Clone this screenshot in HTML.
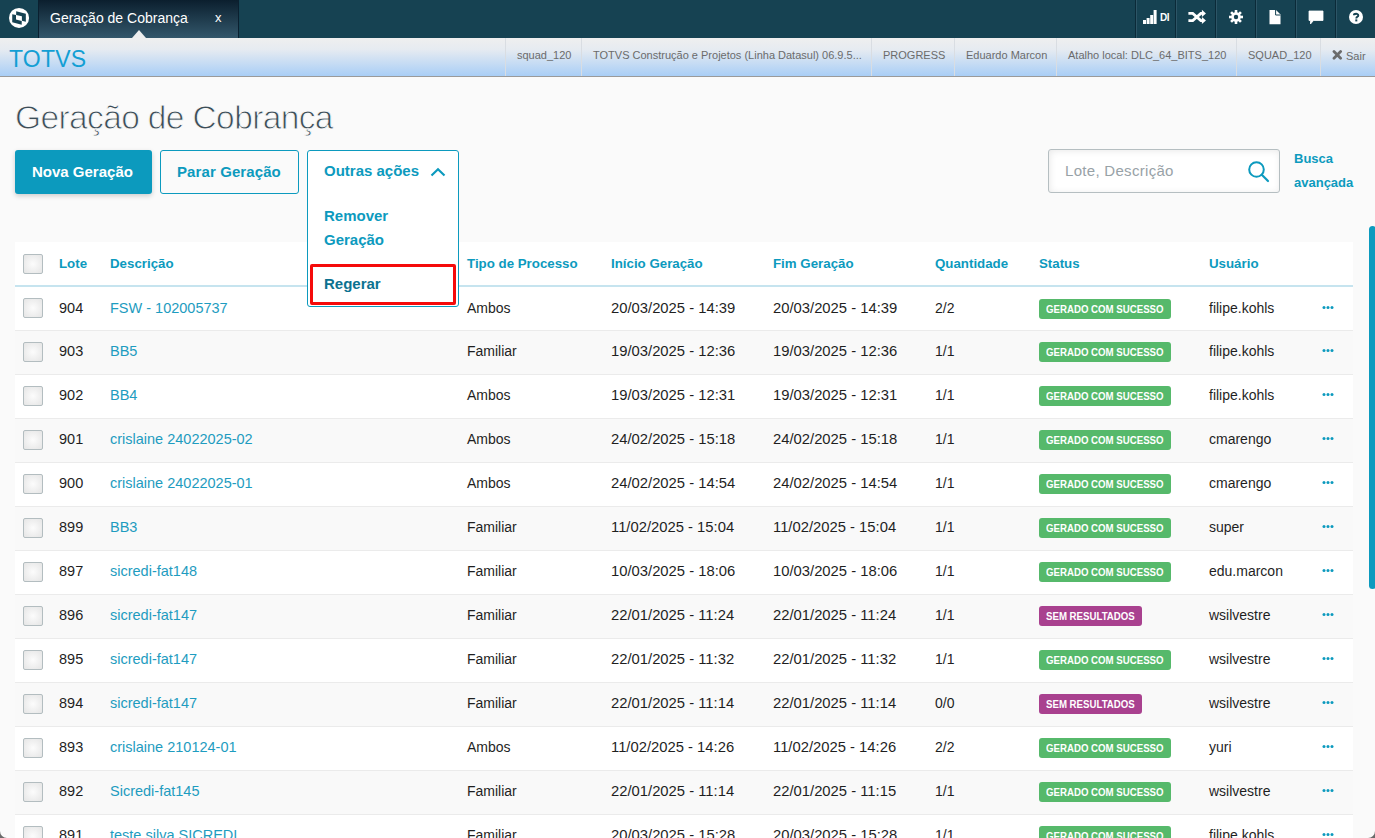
<!DOCTYPE html>
<html><head><meta charset="utf-8">
<style>
*{box-sizing:border-box;margin:0;padding:0}
html,body{width:1375px;height:838px;overflow:hidden;background:#fafafa;font-family:"Liberation Sans",sans-serif}
.abs{position:absolute}
#topbar{position:absolute;left:0;top:0;width:1375px;height:38px;background:#164252}
#tab{position:absolute;left:38px;top:0;width:201px;height:38px;background:linear-gradient(#0b1f2e,#33576b);border-left:1px solid #0a2030;border-right:1px solid #0a2030}
#tab .t{position:absolute;left:11px;top:10px;width:139px;overflow:hidden;white-space:nowrap;color:#fff;font-size:14px}
#tab .x{position:absolute;left:176px;top:10px;color:#fff;font-size:13px}
#notch{position:absolute;left:132px;top:30px;width:0;height:0;border-left:7px solid transparent;border-right:7px solid transparent;border-bottom:8px solid #eeeeee}
.tico{position:absolute;top:0;width:40px;height:38px;border-left:1px solid #0c2a38;box-shadow:inset 1px 0 0 #2c5566}
#bar2{position:absolute;left:0;top:38px;width:1375px;height:39px;background:linear-gradient(#efefef 0%,#e6ebf1 30%,#a9cef6 100%);border-bottom:1px solid #9a9a9a}
#totvs{position:absolute;left:9px;top:46px;font-size:23px;color:#139fd4;letter-spacing:0.2px}
.info{position:absolute;top:38px;height:38px;line-height:35px;font-size:11px;color:#6b6b6b;border-left:1px solid #d9dde2;padding:0 0 0 11px;white-space:nowrap;overflow:hidden}
.sep{position:absolute;top:0;width:2px;height:38px;border-left:1px solid #0b2a38;border-right:1px solid #2d5566}
#title{position:absolute;left:15px;top:99px;font-size:33.5px;letter-spacing:-0.62px;color:#3d4e58;font-weight:normal;-webkit-text-stroke:0.9px #fafafa}
.btn{position:absolute;top:150px;height:44px;border-radius:3px;font-size:15px;font-weight:bold;line-height:42px}
#b1{left:15px;width:137px;background:#0c9abe;color:#fff;line-height:44px;padding-left:17px;box-shadow:0 2px 5px rgba(0,0,0,.18)}
#b2{left:160px;width:139px;border:1px solid #0c9abe;color:#0c9abe;background:transparent;padding-left:16px;letter-spacing:0.1px}
#dd{position:absolute;z-index:5;left:307px;top:150px;width:152px;height:157px;border:1px solid #0c9abe;border-radius:3px;background:#fff}
#dd .h{position:absolute;left:16px;top:11px;font-size:15px;font-weight:bold;color:#0c9abe}
#dd .i{position:absolute;left:16px;font-size:15px;font-weight:bold;color:#0c9abe}
#dd .i.r{color:#0c7290}
#redbox{position:absolute;z-index:6;left:310px;top:264px;width:146px;height:41px;border:3px solid #f50a0a;border-radius:2px}
#search{position:absolute;left:1048px;top:149px;width:232px;height:44px;border:1px solid #b5bec1;border-radius:3px;background:#fff;box-shadow:inset 1px 1px 7px rgba(0,0,0,.09)}
#search .p{position:absolute;left:16px;top:12px;font-size:15px;letter-spacing:0.3px;color:#98a2a7}
#busca{position:absolute;left:1294px;top:147px;font-size:13px;font-weight:bold;color:#0c9abe;line-height:24px}
#table{position:absolute;left:15px;top:242px;width:1338px;height:600px;background:#fff}
.hdr{position:absolute;left:0;top:0;width:1338px;height:45px;border-bottom:2px solid #c6e4ef}
.hd{position:absolute;top:14px;font-size:13.3px;font-weight:bold;color:#0c9abe;white-space:nowrap}
.row{position:absolute;left:0;width:1338px;height:44px;border-bottom:1px solid #ebebeb;background:#fff}
.row.g{background:#f9f9f9}
.in{position:absolute;left:0;width:1338px;height:44px}
.c{position:absolute;top:13px;font-size:14px;color:#1f1f1f;white-space:nowrap}
.lnk{color:#1e9cc0}
.l,.d{font-size:14.5px}
.dt{font-size:14.8px}
.cb{position:absolute;left:8px;width:20px;height:20px;border:1px solid #b3bdc0;border-radius:2px;background:radial-gradient(#fcfcfc,#e5e5e5)}
.st{position:absolute;top:12px;height:20px;line-height:20px;border-radius:3px;color:#fff;font-size:10.5px;font-weight:bold;white-space:nowrap}
.st span{position:absolute;left:7px;top:0;transform:scaleX(0.92);transform-origin:0 50%}
.ok{background:#56b96b}
.sem{background:#a9418f}
.dots{position:absolute;left:1307px;top:18px;width:13px;height:4px}
#scroll{position:absolute;left:1369px;top:226px;width:7px;height:363px;background:#0c9abe;border-radius:3.5px}
</style></head><body>
<div id="topbar"></div>
<div id="tab"><div class="t">Geração de Cobrança:</div><div class="x">x</div></div>
<div id="notch"></div>
<div id="bar2"></div>
<div id="totvs">TOTVS</div>
<div class="info" style="left:505px;width:76px">squad_120</div>
<div class="info" style="left:581px;width:290px">TOTVS Construção e Projetos (Linha Datasul) 06.9.5...</div>
<div class="info" style="left:871px;width:83px">PROGRESS</div>
<div class="info" style="left:954px;width:102px">Eduardo Marcon</div>
<div class="info" style="left:1056px;width:180px">Atalho local: DLC_64_BITS_120</div>
<div class="info" style="left:1236px;width:84px">SQUAD_120</div>
<div class="info" style="left:1320px;width:55px;padding-left:11px"><svg style="position:absolute;left:11px;top:12px" width="11" height="10" viewBox="0 0 11 10"><path d="M2 1.6L8.6 8.2M8.6 1.6L2 8.2" stroke="#6b6b6b" stroke-width="2.8" stroke-linecap="round"/></svg><span style="position:absolute;left:25px;top:1px">Sair</span></div>
<svg class="abs" style="left:4px;top:4px" width="30" height="30" viewBox="0 0 838 838"><circle cx="420" cy="390" r="280" fill="#fff"/><path d="M230 285L335 310L335 435L495 475L495 580L230 510Z" fill="#164252"/><path d="M340 205L610 275L610 495L500 465L500 345L340 305Z" fill="#164252"/></svg>
<div class="sep" style="left:1135px"></div><div class="sep" style="left:1175px"></div><div class="sep" style="left:1215px"></div><div class="sep" style="left:1255px"></div><div class="sep" style="left:1295px"></div><div class="sep" style="left:1335px"></div>
<svg class="abs" style="left:1143px;top:10px" width="14" height="14" viewBox="0 0 14 14"><rect x="0" y="10" width="3" height="4" fill="#fff"/><rect x="3.6" y="8" width="3" height="6" fill="#fff"/><rect x="7.2" y="5" width="3" height="9" fill="#fff"/><rect x="10.6" y="0" width="3" height="14" fill="#fff"/></svg>
<div class="abs" style="left:1160px;top:12px;font-size:10px;font-weight:bold;color:#fff;letter-spacing:-0.5px">DI</div>
<svg class="abs" style="left:1180px;top:5px" width="70" height="28" viewBox="0 0 1375 550"><path d="M165 165H250L410 305H450M165 305H250L410 165H450" fill="none" stroke="#fff" stroke-width="54"/><path d="M430 95L510 165L430 235Z M430 235L510 305L430 375Z" fill="#fff"/></svg>
<svg class="abs" style="left:1229px;top:10px" width="14" height="14" viewBox="-7 -7 14 14"><g fill="#fff"><circle r="4.8"/><rect x="-1.3" y="-7" width="2.6" height="14"/><rect x="-1.3" y="-7" width="2.6" height="14" transform="rotate(45)"/><rect x="-1.3" y="-7" width="2.6" height="14" transform="rotate(90)"/><rect x="-1.3" y="-7" width="2.6" height="14" transform="rotate(135)"/></g><circle r="2.2" fill="#164252"/></svg>
<svg class="abs" style="left:1269px;top:10px" width="12" height="15" viewBox="0 0 12 15"><path d="M0.5 0H7L11.5 4.6V14.2H0.5Z" fill="#fff"/><path d="M6.6 0V5H11.5" fill="none" stroke="#164252" stroke-width="1"/></svg>
<svg class="abs" style="left:1308px;top:10px" width="16" height="15" viewBox="0 0 16 15"><path d="M1 1H15V10.5H5.5L2.5 14V10.5H1Z" fill="#fff" stroke="#fff" stroke-width="0.8" stroke-linejoin="round"/></svg>
<svg class="abs" style="left:1349px;top:10px" width="15" height="15" viewBox="0 0 15 15"><circle cx="7" cy="7" r="7" fill="#fff"/><path d="M4.9 5.2C4.9 3.4 9.3 3.2 9.3 5.4C9.3 6.9 7.3 6.8 7.3 8.4" fill="none" stroke="#164252" stroke-width="1.9"/><rect x="6.3" y="9.4" width="2" height="2" fill="#164252"/></svg>
<div id="title">Geração de Cobrança</div>
<div id="b1" class="btn">Nova Geração</div>
<div id="b2" class="btn">Parar Geração</div>
<div id="dd"><div class="h">Outras ações</div><svg style="position:absolute;left:122px;top:16px" width="16" height="10" viewBox="0 0 16 10"><path d="M1.5 8.5L8 2.2L14.5 8.5" fill="none" stroke="#0c9abe" stroke-width="2.2"/></svg>
<div class="i" style="top:56px">Remover</div><div class="i" style="top:80px">Geração</div><div class="i r" style="top:124px">Regerar</div></div>
<div id="redbox"></div>
<div id="search"><div class="p">Lote, Descrição</div><svg style="position:absolute;left:198px;top:10px" width="24" height="24" viewBox="0 0 24 24"><circle cx="9.5" cy="9.5" r="7.3" fill="none" stroke="#0c9abe" stroke-width="2"/><path d="M14.8 14.8L21 21" stroke="#0c9abe" stroke-width="2.2" stroke-linecap="round"/></svg></div>
<div id="busca">Busca<br>avançada</div>
<div id="table">
<div class="hdr"><div class="cb" style="top:12px"></div>
<div class="hd" style="left:44px">Lote</div>
<div class="hd" style="left:95px">Descrição</div>
<div class="hd" style="left:452px">Tipo de Processo</div>
<div class="hd" style="left:596px">Início Geração</div>
<div class="hd" style="left:758px">Fim Geração</div>
<div class="hd" style="left:920px">Quantidade</div>
<div class="hd" style="left:1024px">Status</div>
<div class="hd" style="left:1194px">Usuário</div>
</div>
<div class="row" style="top:45px"><div class="in" style="top:0px"><div class="cb" style="top:11px"></div><div class="c l" style="left:44px">904</div><div class="c lnk d" style="left:95px">FSW - 102005737</div><div class="c" style="left:452px">Ambos</div><div class="c dt" style="left:596px">20/03/2025 - 14:39</div><div class="c dt" style="left:758px">20/03/2025 - 14:39</div><div class="c" style="left:920px">2/2</div><div class="st ok" style="left:1024px;width:132px"><span>GERADO COM SUCESSO</span></div><div class="c u" style="left:1194px">filipe.kohls</div><svg class="dots" viewBox="0 0 13 4"><circle cx="2" cy="2.4" r="1.5" fill="#0c9abe"/><circle cx="6" cy="2.4" r="1.5" fill="#0c9abe"/><circle cx="10" cy="2.4" r="1.5" fill="#0c9abe"/></svg></div></div>
<div class="row g" style="top:89px"><div class="in" style="top:-1px"><div class="cb" style="top:12px"></div><div class="c l" style="left:44px">903</div><div class="c lnk d" style="left:95px">BB5</div><div class="c" style="left:452px">Familiar</div><div class="c dt" style="left:596px">19/03/2025 - 12:36</div><div class="c dt" style="left:758px">19/03/2025 - 12:36</div><div class="c" style="left:920px">1/1</div><div class="st ok" style="left:1024px;width:132px"><span>GERADO COM SUCESSO</span></div><div class="c u" style="left:1194px">filipe.kohls</div><svg class="dots" viewBox="0 0 13 4"><circle cx="2" cy="2.4" r="1.5" fill="#0c9abe"/><circle cx="6" cy="2.4" r="1.5" fill="#0c9abe"/><circle cx="10" cy="2.4" r="1.5" fill="#0c9abe"/></svg></div></div>
<div class="row" style="top:133px"><div class="in" style="top:-1px"><div class="cb" style="top:12px"></div><div class="c l" style="left:44px">902</div><div class="c lnk d" style="left:95px">BB4</div><div class="c" style="left:452px">Ambos</div><div class="c dt" style="left:596px">19/03/2025 - 12:31</div><div class="c dt" style="left:758px">19/03/2025 - 12:31</div><div class="c" style="left:920px">1/1</div><div class="st ok" style="left:1024px;width:132px"><span>GERADO COM SUCESSO</span></div><div class="c u" style="left:1194px">filipe.kohls</div><svg class="dots" viewBox="0 0 13 4"><circle cx="2" cy="2.4" r="1.5" fill="#0c9abe"/><circle cx="6" cy="2.4" r="1.5" fill="#0c9abe"/><circle cx="10" cy="2.4" r="1.5" fill="#0c9abe"/></svg></div></div>
<div class="row g" style="top:177px"><div class="in" style="top:-1px"><div class="cb" style="top:12px"></div><div class="c l" style="left:44px">901</div><div class="c lnk d" style="left:95px">crislaine 24022025-02</div><div class="c" style="left:452px">Ambos</div><div class="c dt" style="left:596px">24/02/2025 - 15:18</div><div class="c dt" style="left:758px">24/02/2025 - 15:18</div><div class="c" style="left:920px">1/1</div><div class="st ok" style="left:1024px;width:132px"><span>GERADO COM SUCESSO</span></div><div class="c u" style="left:1194px">cmarengo</div><svg class="dots" viewBox="0 0 13 4"><circle cx="2" cy="2.4" r="1.5" fill="#0c9abe"/><circle cx="6" cy="2.4" r="1.5" fill="#0c9abe"/><circle cx="10" cy="2.4" r="1.5" fill="#0c9abe"/></svg></div></div>
<div class="row" style="top:221px"><div class="in" style="top:-1px"><div class="cb" style="top:12px"></div><div class="c l" style="left:44px">900</div><div class="c lnk d" style="left:95px">crislaine 24022025-01</div><div class="c" style="left:452px">Ambos</div><div class="c dt" style="left:596px">24/02/2025 - 14:54</div><div class="c dt" style="left:758px">24/02/2025 - 14:54</div><div class="c" style="left:920px">1/1</div><div class="st ok" style="left:1024px;width:132px"><span>GERADO COM SUCESSO</span></div><div class="c u" style="left:1194px">cmarengo</div><svg class="dots" viewBox="0 0 13 4"><circle cx="2" cy="2.4" r="1.5" fill="#0c9abe"/><circle cx="6" cy="2.4" r="1.5" fill="#0c9abe"/><circle cx="10" cy="2.4" r="1.5" fill="#0c9abe"/></svg></div></div>
<div class="row g" style="top:265px"><div class="in" style="top:-1px"><div class="cb" style="top:12px"></div><div class="c l" style="left:44px">899</div><div class="c lnk d" style="left:95px">BB3</div><div class="c" style="left:452px">Familiar</div><div class="c dt" style="left:596px">11/02/2025 - 15:04</div><div class="c dt" style="left:758px">11/02/2025 - 15:04</div><div class="c" style="left:920px">1/1</div><div class="st ok" style="left:1024px;width:132px"><span>GERADO COM SUCESSO</span></div><div class="c u" style="left:1194px">super</div><svg class="dots" viewBox="0 0 13 4"><circle cx="2" cy="2.4" r="1.5" fill="#0c9abe"/><circle cx="6" cy="2.4" r="1.5" fill="#0c9abe"/><circle cx="10" cy="2.4" r="1.5" fill="#0c9abe"/></svg></div></div>
<div class="row" style="top:309px"><div class="in" style="top:-1px"><div class="cb" style="top:12px"></div><div class="c l" style="left:44px">897</div><div class="c lnk d" style="left:95px">sicredi-fat148</div><div class="c" style="left:452px">Familiar</div><div class="c dt" style="left:596px">10/03/2025 - 18:06</div><div class="c dt" style="left:758px">10/03/2025 - 18:06</div><div class="c" style="left:920px">1/1</div><div class="st ok" style="left:1024px;width:132px"><span>GERADO COM SUCESSO</span></div><div class="c u" style="left:1194px">edu.marcon</div><svg class="dots" viewBox="0 0 13 4"><circle cx="2" cy="2.4" r="1.5" fill="#0c9abe"/><circle cx="6" cy="2.4" r="1.5" fill="#0c9abe"/><circle cx="10" cy="2.4" r="1.5" fill="#0c9abe"/></svg></div></div>
<div class="row g" style="top:353px"><div class="in" style="top:-1px"><div class="cb" style="top:12px"></div><div class="c l" style="left:44px">896</div><div class="c lnk d" style="left:95px">sicredi-fat147</div><div class="c" style="left:452px">Familiar</div><div class="c dt" style="left:596px">22/01/2025 - 11:24</div><div class="c dt" style="left:758px">22/01/2025 - 11:24</div><div class="c" style="left:920px">1/1</div><div class="st sem" style="left:1024px;width:103px"><span>SEM RESULTADOS</span></div><div class="c u" style="left:1194px">wsilvestre</div><svg class="dots" viewBox="0 0 13 4"><circle cx="2" cy="2.4" r="1.5" fill="#0c9abe"/><circle cx="6" cy="2.4" r="1.5" fill="#0c9abe"/><circle cx="10" cy="2.4" r="1.5" fill="#0c9abe"/></svg></div></div>
<div class="row" style="top:397px"><div class="in" style="top:-1px"><div class="cb" style="top:12px"></div><div class="c l" style="left:44px">895</div><div class="c lnk d" style="left:95px">sicredi-fat147</div><div class="c" style="left:452px">Familiar</div><div class="c dt" style="left:596px">22/01/2025 - 11:32</div><div class="c dt" style="left:758px">22/01/2025 - 11:32</div><div class="c" style="left:920px">1/1</div><div class="st ok" style="left:1024px;width:132px"><span>GERADO COM SUCESSO</span></div><div class="c u" style="left:1194px">wsilvestre</div><svg class="dots" viewBox="0 0 13 4"><circle cx="2" cy="2.4" r="1.5" fill="#0c9abe"/><circle cx="6" cy="2.4" r="1.5" fill="#0c9abe"/><circle cx="10" cy="2.4" r="1.5" fill="#0c9abe"/></svg></div></div>
<div class="row g" style="top:441px"><div class="in" style="top:-1px"><div class="cb" style="top:12px"></div><div class="c l" style="left:44px">894</div><div class="c lnk d" style="left:95px">sicredi-fat147</div><div class="c" style="left:452px">Familiar</div><div class="c dt" style="left:596px">22/01/2025 - 11:14</div><div class="c dt" style="left:758px">22/01/2025 - 11:14</div><div class="c" style="left:920px">0/0</div><div class="st sem" style="left:1024px;width:103px"><span>SEM RESULTADOS</span></div><div class="c u" style="left:1194px">wsilvestre</div><svg class="dots" viewBox="0 0 13 4"><circle cx="2" cy="2.4" r="1.5" fill="#0c9abe"/><circle cx="6" cy="2.4" r="1.5" fill="#0c9abe"/><circle cx="10" cy="2.4" r="1.5" fill="#0c9abe"/></svg></div></div>
<div class="row" style="top:485px"><div class="in" style="top:-1px"><div class="cb" style="top:12px"></div><div class="c l" style="left:44px">893</div><div class="c lnk d" style="left:95px">crislaine 210124-01</div><div class="c" style="left:452px">Ambos</div><div class="c dt" style="left:596px">11/02/2025 - 14:26</div><div class="c dt" style="left:758px">11/02/2025 - 14:26</div><div class="c" style="left:920px">2/2</div><div class="st ok" style="left:1024px;width:132px"><span>GERADO COM SUCESSO</span></div><div class="c u" style="left:1194px">yuri</div><svg class="dots" viewBox="0 0 13 4"><circle cx="2" cy="2.4" r="1.5" fill="#0c9abe"/><circle cx="6" cy="2.4" r="1.5" fill="#0c9abe"/><circle cx="10" cy="2.4" r="1.5" fill="#0c9abe"/></svg></div></div>
<div class="row g" style="top:529px"><div class="in" style="top:-1px"><div class="cb" style="top:12px"></div><div class="c l" style="left:44px">892</div><div class="c lnk d" style="left:95px">Sicredi-fat145</div><div class="c" style="left:452px">Familiar</div><div class="c dt" style="left:596px">22/01/2025 - 11:14</div><div class="c dt" style="left:758px">22/01/2025 - 11:15</div><div class="c" style="left:920px">1/1</div><div class="st ok" style="left:1024px;width:132px"><span>GERADO COM SUCESSO</span></div><div class="c u" style="left:1194px">wsilvestre</div><svg class="dots" viewBox="0 0 13 4"><circle cx="2" cy="2.4" r="1.5" fill="#0c9abe"/><circle cx="6" cy="2.4" r="1.5" fill="#0c9abe"/><circle cx="10" cy="2.4" r="1.5" fill="#0c9abe"/></svg></div></div>
<div class="row" style="top:573px"><div class="in" style="top:-1px"><div class="cb" style="top:12px"></div><div class="c l" style="left:44px">891</div><div class="c lnk d" style="left:95px">teste silva SICREDI</div><div class="c" style="left:452px">Familiar</div><div class="c dt" style="left:596px">20/03/2025 - 15:28</div><div class="c dt" style="left:758px">20/03/2025 - 15:28</div><div class="c" style="left:920px">1/1</div><div class="st ok" style="left:1024px;width:132px"><span>GERADO COM SUCESSO</span></div><div class="c u" style="left:1194px">filipe.kohls</div><svg class="dots" viewBox="0 0 13 4"><circle cx="2" cy="2.4" r="1.5" fill="#0c9abe"/><circle cx="6" cy="2.4" r="1.5" fill="#0c9abe"/><circle cx="10" cy="2.4" r="1.5" fill="#0c9abe"/></svg></div></div>
</div>
<div id="scroll"></div>
<svg class="abs" style="left:0;top:0;z-index:10" width="1375" height="838" viewBox="0 0 1375 838"><path d="M0 831A7 7 0 0 0 7 838H0Z" fill="#6a6a6a"/><path d="M1375 831A7 7 0 0 1 1368 838H1375Z" fill="#6a6a6a"/></svg>
</body></html>
